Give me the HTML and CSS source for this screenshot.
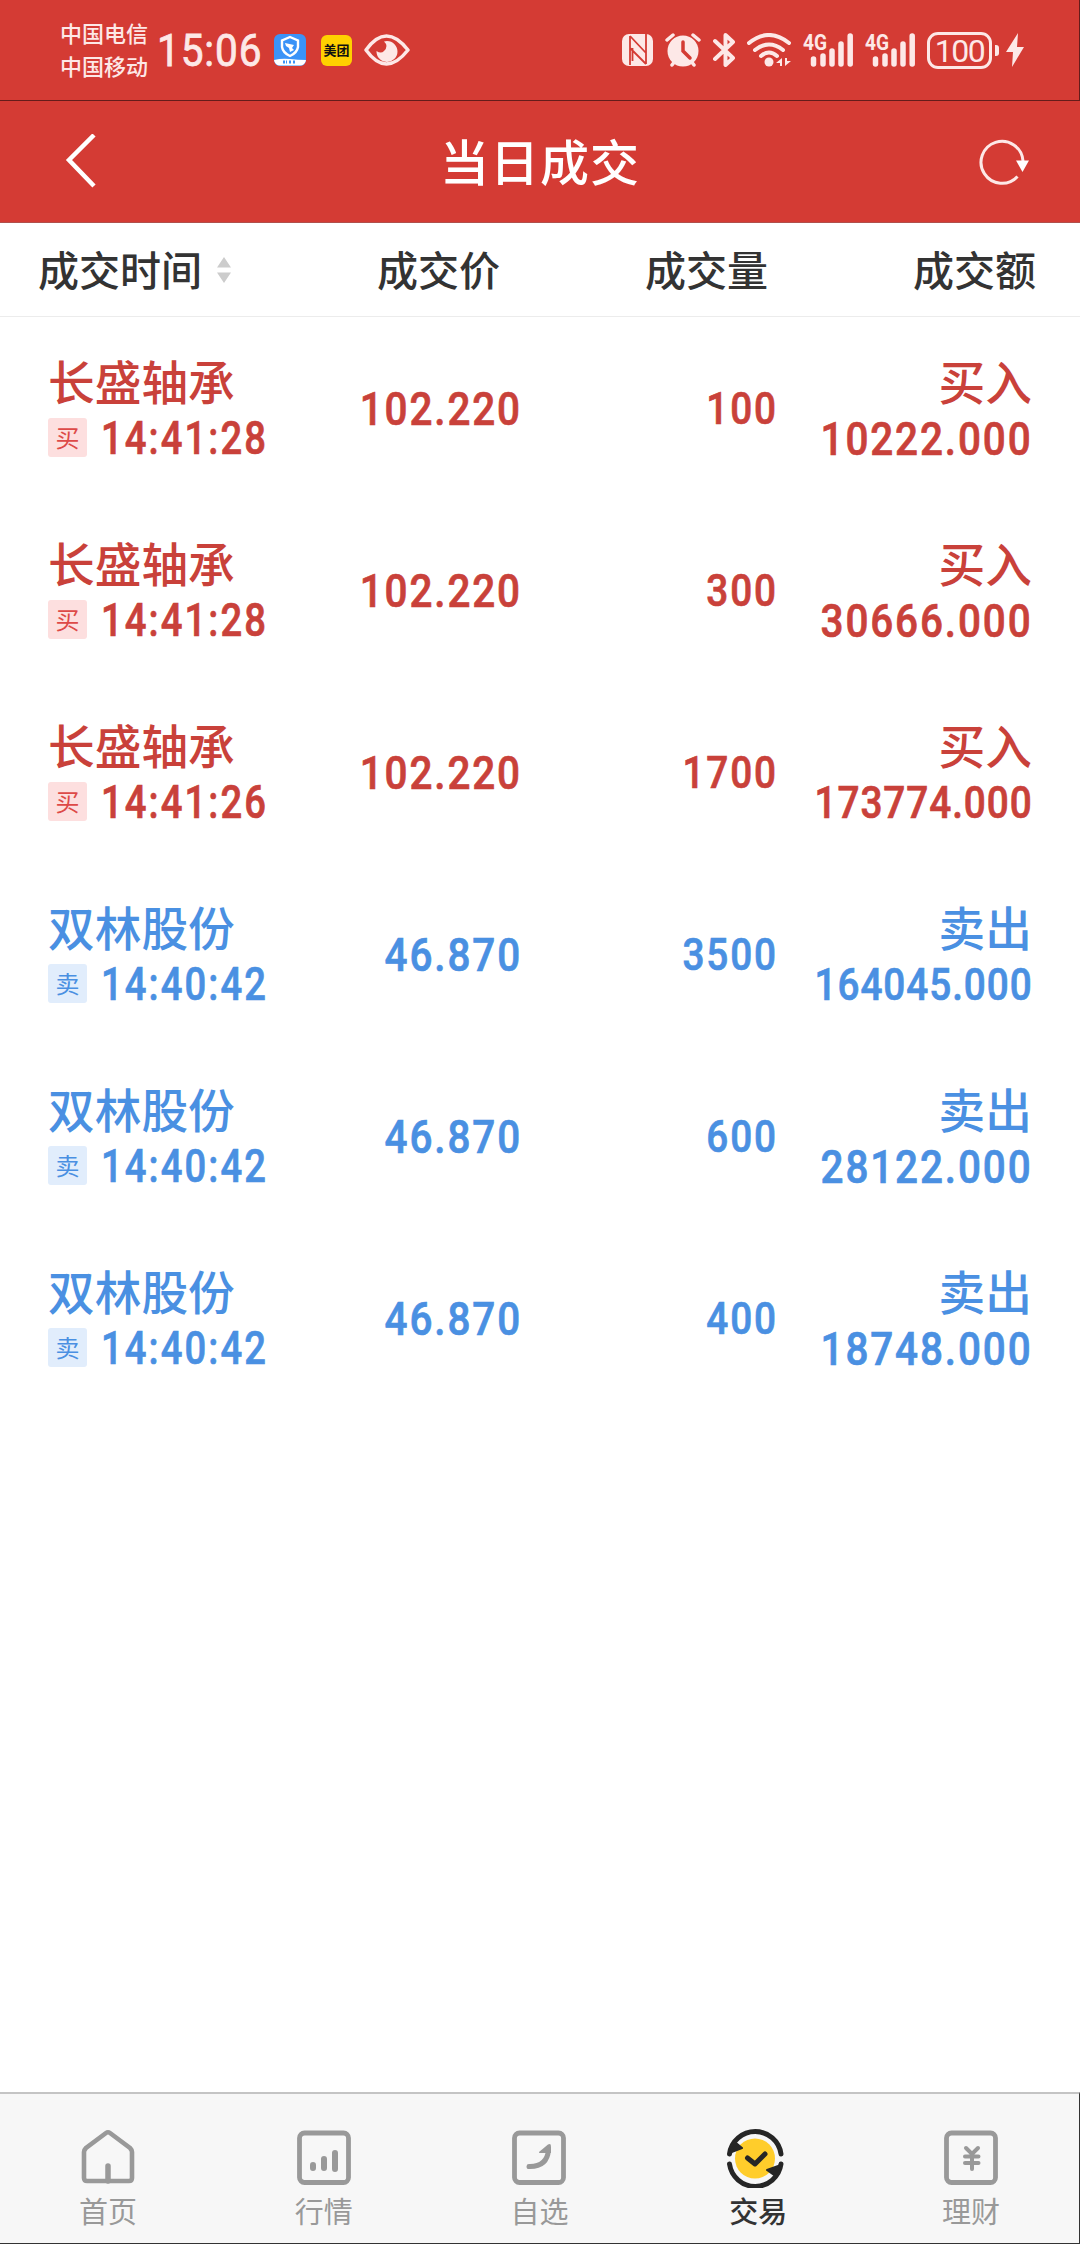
FILE: index.html
```html
<!DOCTYPE html>
<html lang="zh-CN">
<head>
    <meta charset="UTF-8">
    <meta name="viewport" content="width=device-width, initial-scale=1.0">
    <title>当日成交</title>
    <link rel="stylesheet" href="styles.css">
</head>
<body>
    <!-- Status bar -->
    <div class="status">
        <div class="carriers">
            <div>中国电信</div>
            <div>中国移动</div>
        </div>
        <div class="clock">15:06</div>
        <svg class="app-blue" width="32" height="32" viewBox="0 0 32 32">
            <rect width="32" height="32" rx="6" fill="#3b93f7"/>
            <path d="M0 26Q8 24 16 25T32 26V26A6 6 0 0 1 26 31.500H6A6 6 0 0 1 0 26Z" fill="#fff"/>
            <path d="M16 3L24 6.500V13Q23 19 16 22Q9 19 8 13V6.500Z" fill="none" stroke="#fff" stroke-width="2.400"/>
            <path d="M11 9L20 11L18 14L20 16L16 18L15 14L12 12Z" fill="#fff"/>
            <path d="M9 28h4M15 28h2M19 28h3" stroke="#3b93f7" stroke-width="3" stroke-dasharray="2 1"/>
        </svg>
        <div class="app-yellow">美团</div>
        <svg class="eye" width="46" height="32" viewBox="0 0 46 32">
            <path d="M2 16Q22 -12 44 16Q22 44 2 16Z" fill="none" stroke="#fde8e7" stroke-width="3.500" stroke-linejoin="round"/>
            <path d="M23 7A10.500 10.500 0 1 1 12.500 17Q17 20 20 17Q25 12 20 7.500Z" fill="#fde8e7"/>
        </svg>
        <div class="status-right">
            <svg class="nfc" width="32" height="32" viewBox="0 0 32 32">
                <rect width="31" height="32" rx="7" fill="#fde8e7"/>
                <path d="M8 2V31M8 2L24 19M8 14L24 30M24 0V30M10.500 14V27" fill="none" stroke="#d43b34" stroke-width="1.800"/>
            </svg>
            <svg class="alarm" width="36" height="34" viewBox="0 0 36 34">
                <circle cx="18" cy="18" r="15.500" fill="#fde8e7"/>
                <path d="M2 7L8 2M34 7L28 2M7 32L10 28M29 32L26 28" stroke="#fde8e7" stroke-width="3.500" stroke-linecap="round"/>
                <path d="M18 9V18L25 25" fill="none" stroke="#d43b34" stroke-width="3.500" stroke-linecap="round"/>
            </svg>
            <svg class="bluetooth" width="22" height="34" viewBox="0 0 22 34">
                <path d="M2 8L20 25L12.500 32V2L20 9L2 26" fill="none" stroke="#fde8e7" stroke-width="4" stroke-linecap="round" stroke-linejoin="round"/>
            </svg>
            <svg class="wifi" width="44" height="34" viewBox="0 0 44 34">
                <path d="M2 10Q22 -6 42 10M8 17Q22 6 36 17M14 23Q22 16 30 23" fill="none" stroke="#fde8e7" stroke-width="4" stroke-linecap="round"/>
                <circle cx="22" cy="29" r="4.500" fill="#fde8e7"/>
                <path d="M29 30L35 25V33H33V30ZM44 28L38 33V25H40V28Z" fill="#fde8e7"/>
            </svg>
            <svg class="signal" width="50" height="36" viewBox="0 0 50 36">
                <text x="0" y="17.500" textLength="24" lengthAdjust="spacingAndGlyphs">4G</text>
                <path d="M10.500 27V32M20 24V32M29 19V32M38 12V32M47.200 4V32" stroke="#fde8e7" stroke-width="5.500" stroke-linecap="round"/>
            </svg>
            <svg class="signal" width="50" height="36" viewBox="0 0 50 36">
                <text x="0" y="17.500" textLength="24" lengthAdjust="spacingAndGlyphs">4G</text>
                <path d="M10.500 27V32M20 24V32M29 19V32M38 12V32M47.200 4V32" stroke="#fde8e7" stroke-width="5.500" stroke-linecap="round"/>
            </svg>
            <div class="battery">100</div>
            <div class="battery-tip"></div>
            <svg class="bolt" width="18" height="34" viewBox="0 0 18 34">
                <path d="M12 0L0 19H7L6 34L18 14H11Z" fill="#fde8e7"/>
            </svg>
        </div>
    </div>

    <!-- Title bar -->
    <div class="navbar">
        <svg class="back" width="32" height="56" viewBox="0 0 32 56">
            <path d="M29 1L4 26L29 52" fill="none" stroke="#fff" stroke-width="4.500"/>
        </svg>
        <h1>当日成交</h1>
        <svg class="refresh" width="52" height="48" viewBox="0 0 52 48">
            <path d="M38.500 38.500A21 21 0 1 1 44 23" fill="none" stroke="#fde8e7" stroke-width="3"/>
            <path d="M37 22.500H50L43.500 34Z" fill="#fff"/>
        </svg>
    </div>

    <div class="row head">
        <div class="col-time">成交时间
            <svg width="14" height="26" viewBox="0 0 14 26">
                <path d="M7 0L14 10.500H0ZM0 15.500H14L7 26Z" fill="#ccc"/>
            </svg>
        </div>
        <div class="col-price">成交价</div>
        <div class="col-count">成交量</div>
        <div class="col-total">成交额</div>
    </div>

    <!-- Deals, filled by the script below -->
    <div class="list" id="list"></div>

    <div class="tabs">
        <div class="tab">
            <svg width="60" height="60" viewBox="0 0 60 60">
                <path d="M6 24Q6 22 8 20L28 5Q30 3.500 32 5L52 20Q54 22 54 24V50Q54 53 51 53H9Q6 53 6 50Z" fill="none" stroke="#999" stroke-width="4.600"/>
                <path d="M30 38V53" stroke="#999" stroke-width="5.500" stroke-linecap="round"/>
            </svg>
            <span>首页</span>
        </div>
        <div class="tab">
            <svg width="60" height="60" viewBox="0 0 60 60">
                <rect x="5.500" y="5" width="49" height="49.500" rx="5" fill="none" stroke="#999" stroke-width="4.800"/>
                <path d="M19 37V40M30 31V40M41 25V41" stroke="#999" stroke-width="6" stroke-linecap="round"/>
            </svg>
            <span>行情</span>
        </div>
        <div class="tab">
            <svg width="60" height="60" viewBox="0 0 60 60">
                <rect x="5.500" y="5" width="49" height="49.500" rx="5" fill="none" stroke="#999" stroke-width="4.800"/>
                <path d="M20 38.500Q38 39 39.500 22" fill="none" stroke="#999" stroke-width="5" stroke-linecap="round"/>
                <path d="M30 24L39 16.500Q42 15 42 18.500V25H31Q29.500 25 30 24Z" fill="#999"/>
            </svg>
            <span>自选</span>
        </div>
        <div class="tab active">
            <svg width="60" height="60" viewBox="0 0 60 60">
                <circle cx="30" cy="30.500" r="20" fill="#ffcd2b"/>
                <path d="M4.500 26A26 26 0 0 1 56 26M4.500 36A26 26 0 0 0 56 36" fill="none" stroke="#262626" stroke-width="5" stroke-linecap="round"/>
                <path d="M4 26L11 15L17 20L4 25ZM56 37L49 47L42 42L56 37Z" fill="#262626" stroke="#262626" stroke-width="2" stroke-linejoin="round"/>
                <path d="M22.500 30L30 36L40 26" fill="none" stroke="#262626" stroke-width="5" stroke-linecap="round" stroke-linejoin="round"/>
            </svg>
            <span>交易</span>
        </div>
        <div class="tab">
            <svg width="60" height="60" viewBox="0 0 60 60">
                <rect x="5.500" y="5" width="49" height="49.500" rx="5" fill="none" stroke="#999" stroke-width="4.800"/>
                <path d="M25 20L31 26L37 20M24 28.500H37.500M24 35H37.500M31 27V41" fill="none" stroke="#999" stroke-width="4" stroke-linecap="round"/>
            </svg>
            <span>理财</span>
        </div>
    </div>

    <script>
        const deals = [
            { name: '长盛轴承', side: 'buy', time: '14:41:28', price: '102.220', count: '100', total: '10222.000' },
            { name: '长盛轴承', side: 'buy', time: '14:41:28', price: '102.220', count: '300', total: '30666.000' },
            { name: '长盛轴承', side: 'buy', time: '14:41:26', price: '102.220', count: '1700', total: '173774.000' },
            { name: '双林股份', side: 'sell', time: '14:40:42', price: '46.870', count: '3500', total: '164045.000' },
            { name: '双林股份', side: 'sell', time: '14:40:42', price: '46.870', count: '600', total: '28122.000' },
            { name: '双林股份', side: 'sell', time: '14:40:42', price: '46.870', count: '400', total: '18748.000' }
        ];

        // totals over 9 characters get a smaller size to fit the column
        document.getElementById('list').innerHTML = deals.map(d => `
            <div class="row deal ${d.side}">
                <div class="col-time">
                    <div class="name">${d.name}</div>
                    <div class="when"><span class="tag">${d.side === 'buy' ? '买' : '卖'}</span><span class="num time">${d.time}</span></div>
                </div>
                <div class="num">${d.price}</div>
                <div class="num count">${d.count}</div>
                <div class="col-total">
                    <div class="name">${d.side === 'buy' ? '买入' : '卖出'}</div>
                    <div class="num total ${d.total.length > 9 ? 'long' : ''}">${d.total}</div>
                </div>
            </div>`).join('');
    </script>
</body>
</html>
```
FILE: styles.css
```css
* {
    box-sizing: border-box;
}
body {
    margin: 0;
    width: 1080px;
    height: 2244px;
    display: flex;
    flex-direction: column;
    overflow: hidden;
    background: #fff;
    color: #333;
    font-family: 'Noto Sans CJK SC', sans-serif;
}
svg {
    display: block;
    flex: none;
}

/* status bar */
.status {
    display: flex;
    align-items: center;
    height: 101px;
    padding-left: 60px;
    background: #d43b34;
    border-right: 1px solid #651c1a;
    border-bottom: 1px solid #651c1a;
    color: #fde8e7;
}
.carriers {
    width: 97px;
    padding-bottom: 3px;
    font-size: 22px;
    font-weight: 500;
    line-height: 33px;
    white-space: nowrap;
}
.clock {
    width: 117px;
    padding-top: 2px;
    font-family: 'Roboto', sans-serif;
    font-size: 45px;
    line-height: 50px;
    letter-spacing: 1px;
    transform: scaleX(0.9);
    transform-origin: left;
    -webkit-text-stroke: 0.8px #fde8e7;
}
.app-yellow {
    width: 31px;
    height: 31px;
    margin-left: 15px;
    border-radius: 6px;
    background: #ffd100;
    color: #111;
    font-size: 13px;
    font-weight: 700;
    line-height: 30px;
    text-align: center;
}
.eye {
    margin-left: 12px;
}
.status-right {
    display: flex;
    align-items: center;
    margin-left: auto;
    margin-right: 55px;
}
.alarm {
    margin-left: 11px;
}
.bluetooth {
    margin-left: 12px;
}
.wifi {
    margin-left: 12px;
}
.signal {
    margin-left: 12px;
    overflow: visible;
}
.signal text {
    fill: #fde8e7;
    font-family: 'Roboto', sans-serif;
    font-size: 22px;
    font-weight: 700;
}
.battery {
    width: 65px;
    height: 37px;
    margin-left: 12px;
    border: 3px solid #fde8e7;
    border-radius: 11px;
    font-family: 'Roboto', sans-serif;
    font-size: 32px;
    line-height: 33px;
    letter-spacing: -1.500px;
    text-align: center;
}
.battery-tip {
    width: 4px;
    height: 11px;
    margin-left: 3px;
    border-radius: 0 3px 3px 0;
    background: #fde8e7;
}
.bolt {
    margin-left: 7px;
}

/* title bar */
.navbar {
    display: flex;
    align-items: center;
    justify-content: space-between;
    height: 122px;
    padding: 0 49px 0 65px;
    background: #d43b34;
    border-bottom: 1px solid #b0504c;
    color: #fff;
}
.navbar h1 {
    margin: 0;
    padding: 0 0 3px 4px;
    font-size: 49px;
    font-weight: 500;
    line-height: 60px;
    letter-spacing: 1px;
}

/* table */
.row {
    display: grid;
    align-items: center;
    text-align: right;
}
.head {
    height: 94px;
    padding: 0 44px 3px 38px;
    grid-template-columns: 300px 162px 268px 1fr;
    border-bottom: 1px solid #ececec;
    font-size: 41px;
    font-weight: 500;
    line-height: 60px;
}
.head .col-time {
    display: flex;
    align-items: center;
    gap: 15px;
}
.head svg {
    margin-top: 3px;
}
.deal {
    height: 182px;
    padding: 0 48px;
    grid-template-columns: 280px 193px 256px 1fr;
}
.deal .col-time {
    text-align: left;
}
.buy {
    color: #c9413a;
}
.sell {
    color: #4a90e2;
}
.name {
    font-size: 46.700px;
    line-height: 58px;
    font-weight: 500;
}

/* narrow, widely spaced digits */
.num {
    margin-right: -1px;
    font-family: 'Roboto', sans-serif;
    font-size: 47px;
    font-weight: 500;
    letter-spacing: 2.200px;
    white-space: nowrap;
    transform: scaleX(0.86);
    transform-origin: right;
    -webkit-text-stroke: 0.7px currentColor;
}
.count {
    font-size: 45px;
}
.when {
    display: flex;
    align-items: center;
}
.tag {
    width: 39px;
    height: 39px;
    margin-right: 14px;
    border-radius: 3px;
    font-size: 24px;
    line-height: 38px;
    text-align: center;
}
.buy .tag {
    background: #fddfdf;
    color: #dd4a48;
}
.sell .tag {
    background: #e1edfc;
}
.time, .total {
    padding-top: 2px;
    line-height: 55px;
}
.time {
    font-size: 46px;
    letter-spacing: 2.500px;
    transform: scaleX(0.83);
    transform-origin: left;
}
.total.long {
    font-size: 45px;
    letter-spacing: 1.100px;
}
.deal .col-total {
    display: flex;
    flex-direction: column;
    align-items: flex-end;
}

/* bottom tabs */
.tabs {
    display: flex;
    height: 152px;
    margin-top: auto;
    border-top: 2px solid #c4c4c4;
    border-right: 1px solid #333;
    border-bottom: 1px solid #333;
    background: #f7f7f7;
}
.tab {
    flex: 1;
    display: flex;
    flex-direction: column;
    align-items: center;
    padding-top: 34px;
    color: #999;
    font-size: 29px;
    line-height: 45px;
}
.active {
    color: #333;
    font-weight: 500;
}
.active span {
    padding-left: 6px;
}
```
